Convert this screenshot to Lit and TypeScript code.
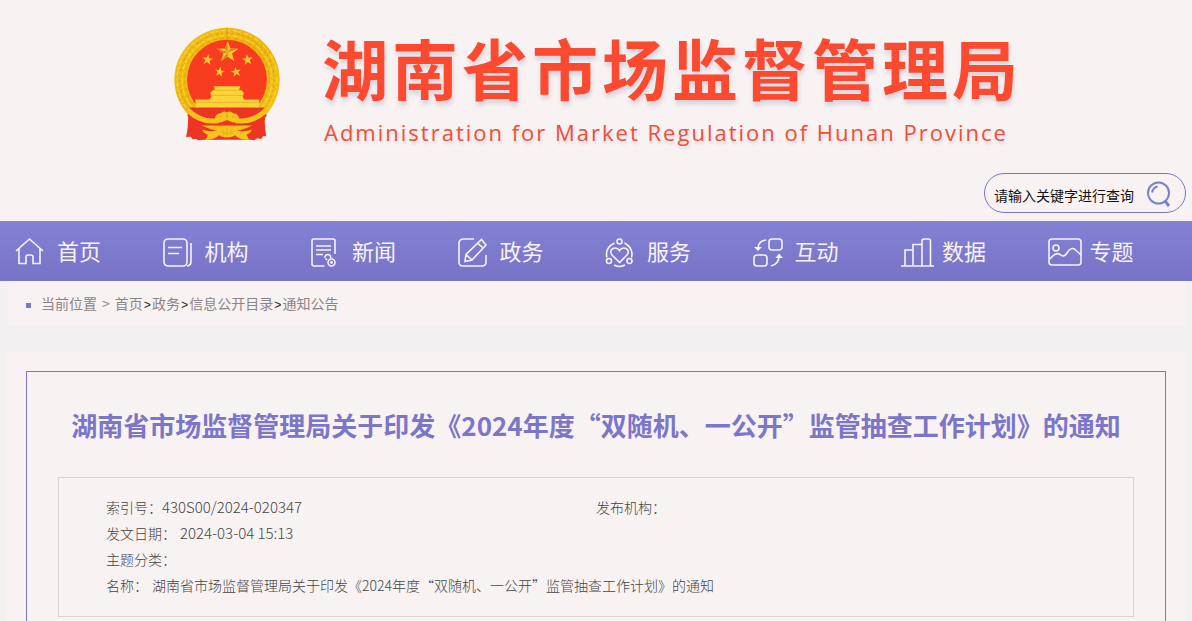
import { LitElement, html, css, svg } from "lit";
import { customElement } from "lit/decorators.js";

const star = (cx: number, cy: number, r: number, turn = 0) => {
  const pts: string[] = [];
  for (let i = 0; i < 10; i++) {
    const a = ((-90 + turn + i * 36) * Math.PI) / 180;
    const d = i % 2 ? r * 0.4 : r;
    pts.push(`${(cx + d * Math.cos(a)).toFixed(1)},${(cy + d * Math.sin(a)).toFixed(1)}`);
  }
  return pts.join(" ");
};

const icons = {
  home: svg`<path d="M0 13 13.500 1 27 13M3 11V25.500H10V19q0-2 2-2h3q2 0 2 2v6.500H24V11"/>`,
  org: svg`<rect x="0" y="1" width="23" height="27" rx="4"/><path d="M27 5V23.500q0 4-4 4.500M4 9.500H18M4 15.500H15"/>`,
  news: svg`<path d="M13.500 28H3q-2 0-2-2V3q0-2 2-2H22q2 0 2 2V16M5 8H20M5 12H20M5 16.500H12M14 20q0-3.500 3-3.500 2.500 0 3 3.500M16 22l-1.500-1.500"/><circle cx="20.500" cy="24.500" r="3.500"/><circle cx="20.500" cy="24.500" r=".6"/>`,
  gov: svg`<path d="M15 1H5Q0 1 0 5V24q0 4 4 4H23q4 0 4-4V17M22.500 1.500 27 7 13 22 6 23.500 7 16.500ZM7 16.500l6 5.500M18.500 5l5 4.500"/>`,
  service: svg`<circle cx="13.500" cy="3.500" r="2.500"/><circle cx="3" cy="23" r="2.500"/><circle cx="23.500" cy="23" r="2.500"/><path d="M8.500 5Q-1.500 10 1 19.500M18.500 5q9.500 5.500 7 14.500M8 27q5.500 3 11 0M13.500 24.500 6 17Q3 12.500 7 10.500 11 9 13.500 12.500 16 9 20 10.500 24 12.500 21 17Z"/>`,
  talk: svg`<rect x="15" y="1" width="13" height="11" rx="3"/><rect x="0" y="17" width="13" height="11" rx="3"/><path d="M12 2Q4 3 4 11M17 28q8-2 8-10"/><path d="M0 9H8L4 13ZM21.500 20H29L25 15.500Z" fill="currentColor" stroke="none"/>`,
  data: svg`<path d="M0 28H33M4 28V12h8M12 28V6.500h9M21 28V3q0-2 2-2h4.500q2 0 2 2V28"/>`,
  topic: svg`<rect x="0" y="1" width="32" height="26" rx="3"/><circle cx="7" cy="10" r="3"/><path d="M1 21Q7 13.500 11 16.500 15 20 18 15 22 8.500 26 11.500L32 17"/>`,
};

const channels = [
  { name: "首页", icon: icons.home, w: 28 },
  { name: "机构", icon: icons.org, w: 29 },
  { name: "新闻", icon: icons.news, w: 25 },
  { name: "政务", icon: icons.gov, w: 29 },
  { name: "服务", icon: icons.service, w: 28 },
  { name: "互动", icon: icons.talk, w: 30 },
  { name: "数据", icon: icons.data, w: 33 },
  { name: "专题", icon: icons.topic, w: 34 },
];

@customElement("national-emblem")
export class NationalEmblem extends LitElement {
  static styles = css`
    :host { display: block; }
    svg { display: block; width: 106px; height: 114px; }
  `;
  render() {
    return html`<svg viewBox="42 36 316 340" role="img" aria-label="国徽">
      <defs>
        <linearGradient id="gold" x1="0" y1="0" x2="1" y2="1">
          <stop offset="0" stop-color="#f3c01c" /><stop offset=".5" stop-color="#edb40f" /><stop offset="1" stop-color="#f4c71e" />
        </linearGradient>
      </defs>
      <path d="M84 274Q86 330 78 364L92 363 98 371 107 370 116 374 130 372H270L282 374 290 368 302 370 308 361 317 362Q309 325 316 274Z" fill="#ee3524" />
      <ellipse cx="200" cy="193" rx="157" ry="155" fill="url(#gold)" />
      <g fill="none" stroke-width="3">
        <ellipse cx="200" cy="193" rx="149" ry="147" stroke="#fbd836" stroke-dasharray="14 5 6 9" />
        <ellipse cx="200" cy="193" rx="141" ry="139" stroke="#d9a00c" stroke-dasharray="5 11 9 7" />
        <ellipse cx="200" cy="193" rx="134" ry="132" stroke="#fbd836" stroke-dasharray="10 8 16 5" />
        <ellipse cx="200" cy="193" rx="126" ry="124" stroke="#dca50e" stroke-dasharray="12 9" />
      </g>
      <path d="M200 38v36" stroke="#d9a00c" stroke-width="3" />
      <circle cx="200" cy="193" r="119" fill="#f93b20" />
      <path d="M88 276H312L318 300 300 330H100L82 300Z" fill="#ee3524" />
      <path d="M82 272Q124 316 176 308L178 322Q126 332 82 294ZM318 272Q276 316 224 308L222 322Q274 332 318 294Z" fill="#f4c21b" />
      <path d="M164 312q0-18 17-19 9-8 19-3 10-5 19 3 17 1 17 19l-18 9-18-8-18 8Z" fill="#f7c61d" />
      <path d="M178 308l8-8M200 309V293M222 308l-8-8" stroke="#c98a10" stroke-width="2" />
      <path d="M126 342q24 9 48 1 8-12 26-12t26 12q24 8 48-1-3 12-16 15l8 15q-28 2-42-13-11 8-24 6-13 2-24-6-14 14-40 13l7-15q-14-3-17-15Z" fill="#f8c41c" />
      <path d="M178 346q22 18 44 0M187 340l4 14M200 336v24M213 340l-4 14" fill="none" stroke="#e0a318" stroke-width="2" />
      <g fill="#fbd43a">
        <path d="M106 252H150V247H250V252H296V276H106Z" />
        <path d="M153 239H247V250H153ZM150 233 158 224H242L251 233 247 240H153ZM160 213H240L236 224H164Z" />
      </g>
      <path d="M150 240H250M106 261H296M160 225H240" stroke="#e5a81a" stroke-width="2" />
      <g fill="#f9c72c">
        <polygon points=${star(202, 111, 34)} />
        <polygon points=${star(142, 134, 17, 8)} />
        <polygon points=${star(261, 134, 17, -8)} />
        <polygon points=${star(178, 170, 16, 10)} />
        <polygon points=${star(227, 170, 16, -10)} />
      </g>
      <path d="M202 111 222 138 210 122ZM202 111 234 100 210 101ZM202 111V78L194 101ZM202 111 170 100 189 115ZM202 111 182 138 202 125Z" fill="#d08a1c" />
    </svg>`;
  }
}

@customElement("app-root")
export class AppRoot extends LitElement {
  static styles = css`
    :host {
      display: flex;
      flex-direction: column;
      min-height: 100vh;
      background: #f2f0f1;
      font-family: "Noto Sans CJK SC", sans-serif;
      font-size: 14px;
      line-height: 26px;
      color: #555;
    }
    * { box-sizing: border-box; }
    a { color: inherit; text-decoration: none; }
    .masthead { background: #f8f2f2; padding: 18px 6px 8px; }
    .brand { display: flex; justify-content: center; gap: 42px; padding-left: 4px; }
    .emblem { margin-top: 9px; }
    .site { color: #fb4a30; }
    .site-name {
      margin: 0;
      font-size: 66px;
      font-weight: 700;
      line-height: 96px;
      letter-spacing: 4px;
      text-shadow: 1px 4px 4px rgba(120, 120, 160, 0.25);
    }
    .site-en {
      margin: 2px 0 0;
      padding-left: 2px;
      font-family: "Open Sans", "Noto Sans", sans-serif;
      font-size: 22px;
      line-height: 32px;
      letter-spacing: 2px;
      color: #ee4f38;
      text-shadow: 1px 3px 3px rgba(120, 120, 160, 0.2);
    }
    .search {
      display: flex;
      align-items: center;
      width: 202px;
      height: 40px;
      margin: 25px 0 0 auto;
      padding: 0 14px 0 9px;
      border: 1px solid #7b76c8;
      border-radius: 20px;
    }
    .search-input {
      flex: 1;
      min-width: 0;
      height: 38px;
      padding: 4px 0 0;
      border: 0;
      outline: 0;
      background: none;
      font: inherit;
      color: #111;
    }
    .search-input::placeholder { color: #111; opacity: 1; }
    .search-button { padding: 2px 0 0; border: 0; background: none; line-height: 0; color: #7b80cc; cursor: pointer; }
    .nav {
      padding-right: 12px;
      background: linear-gradient(#8382d4, #7773c6);
      color: #f8f2f8;
    }
    .nav-list { display: grid; grid-template-columns: repeat(8, 1fr); margin: 0; padding: 0; list-style: none; }
    .nav-link { display: flex; align-items: center; height: 60px; padding: 0 0 2px 16px; font-size: 22px; }
    .nav-icon { display: flex; align-items: center; width: 41px; padding-top: 4px; }
    .nav-icon svg, .search-button svg { fill: none; stroke: currentColor; stroke-width: 2; overflow: visible; }
    .nav-icon svg { stroke-width: 1.6; }
    .crumbs {
      display: flex;
      align-items: center;
      margin: 0 6px 26px 8px;
      height: 45px;
      padding: 0 0 0 18px;
      background: #f8f2f2;
      color: #8c8488;
      line-height: 24px;
    }
    .crumbs a, .crumb-lead { padding-bottom: 2px; }
    .bullet { width: 5px; height: 5px; margin: 3px 10px 0 0; background: #7b76c8; }
    .crumb-lead { display: flex; gap: 5px; margin-right: 5px; }
    .sep { padding: 4px 1px 0; font-family: "Liberation Mono", monospace; font-size: 12px; color: #222; }
    .panel { flex: 1; display: flex; margin: 0 6px; padding: 19px 20px 0; background: #f8f2f2; }
    .article { flex: 1; padding: 0 31px 4px; border: 1px solid #7b76c8; border-bottom: 0; }
    .title {
      margin: 0;
      padding: 33px 0 32px;
      font-size: 26px;
      line-height: 40px;
      font-weight: 700;
      text-align: center;
      color: #7b76c8;
    }
    .meta {
      display: grid;
      grid-template-columns: 1fr 1fr;
      margin: 0;
      padding: 16px 47px 18px;
      border: 1px solid #d8d3d3;
      font-weight: 300;
      color: #444;
    }
    .meta-row { display: flex; }
    .wide { grid-column: 1 / -1; }
    .term, .value { margin: 0; }
    .gap { margin-left: 4px; }
    .code { font-size: 15px; }
  `;

  render() {
    const trail = ["首页", "政务", "信息公开目录", "通知公告"];
    return html`
      <header class="masthead">
        <div class="brand">
          <national-emblem class="emblem"></national-emblem>
          <div class="site">
            <h1 class="site-name">湖南省市场监督管理局</h1>
            <p class="site-en" lang="en">Administration for Market Regulation of Hunan Province</p>
          </div>
        </div>
        <form class="search" role="search" @submit=${(e: Event) => e.preventDefault()}>
          <input class="search-input" type="text" aria-label="站内搜索" placeholder="请输入关键字进行查询" />
          <button class="search-button" type="submit" aria-label="搜索">
            <svg width="24" height="26" viewBox="0 0 24 26" aria-hidden="true">
              <circle cx="11.500" cy="12" r="10.500" />
              <path d="M5 11.500Q6 6.500 10.500 5.500" />
              <path d="M18 20 22 25" stroke-width="3" />
            </svg>
          </button>
        </form>
      </header>
      <nav class="nav" aria-label="主导航">
        <ul class="nav-list">
          ${channels.map(
            (c) => html`<li><a class="nav-link" href="#">
              <span class="nav-icon"><svg width=${c.w} height="29" viewBox="0 0 ${c.w} 29" aria-hidden="true">${c.icon}</svg></span>${c.name}</a></li>`
          )}
        </ul>
      </nav>
      <nav class="crumbs" aria-label="当前位置">
        <span class="bullet"></span><span class="crumb-lead"><span>当前位置</span><span>&gt;</span></span>
        ${trail.map((t, i) => html`${i ? html`<span class="sep">&gt;</span>` : ""}<a href="#">${t}</a>`)}
      </nav>
      <main class="panel">
        <article class="article">
          <h2 class="title">湖南省市场监督管理局关于印发《2024年度“双随机、一公开”监管抽查工作计划》的通知</h2>
          <dl class="meta">
            <div class="meta-row"><dt class="term">索引号：</dt><dd class="value code">430S00/2024-020347</dd></div>
            <div class="meta-row"><dt class="term">发布机构：</dt><dd class="value"></dd></div>
            <div class="meta-row wide"><dt class="term">发文日期：</dt><dd class="value code gap">2024-03-04 15:13</dd></div>
            <div class="meta-row wide"><dt class="term">主题分类：</dt><dd class="value"></dd></div>
            <div class="meta-row wide"><dt class="term">名称：</dt><dd class="value gap">湖南省市场监督管理局关于印发《2024年度“双随机、一公开”监管抽查工作计划》的通知</dd></div>
          </dl>
        </article>
      </main>
    `;
  }
}
